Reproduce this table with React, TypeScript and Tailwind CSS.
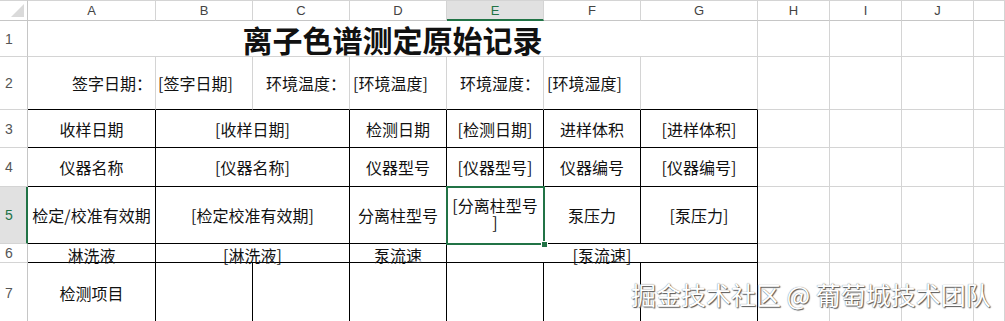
import type { ReactNode } from 'react';

const FONT = '"Noto Sans CJK SC", "Noto Sans", sans-serif';
const LETTERS = ['A', 'B', 'C', 'D', 'E', 'F', 'G', 'H', 'I', 'J', ''];

const spans: Record<number, string> = { 1: '', 2: 'col-span-2', 3: 'col-span-3', 7: 'col-span-7' };

type CellProps = {
  children?: ReactNode;
  span?: number;
  right?: 'k' | 'g';
  bottom?: 'k' | 'g';
  className?: string;
};

function Cell({ children, span = 1, right = 'g', bottom = 'g', className = '' }: CellProps) {
  return (
    <div
      className={`flex items-center overflow-visible whitespace-nowrap border-r border-b text-[16px] leading-none text-[#111] ${
        spans[span]
      } ${right === 'k' ? 'border-r-black' : 'border-r-[#d4d4d4]'} ${
        bottom === 'k' ? 'border-b-black' : 'border-b-[#d4d4d4]'
      } ${className}`}
    >
      {children}
    </div>
  );
}

// black-bordered table cell, centered text
function T({ children, span = 1, className = '' }: { children?: ReactNode; span?: number; className?: string }) {
  return (
    <Cell span={span} right="k" bottom="k" className={`justify-center ${className}`}>
      {children}
    </Cell>
  );
}

function RowHead({ n, active = false }: { n: number; active?: boolean }) {
  return (
    <div
      className={`flex items-center pl-[5px] border-b border-b-[#d4d4d4] text-[14px] leading-none ${
        active
          ? 'bg-[#e1e1e1] text-[#217346] border-r-2 border-r-[#217346]'
          : 'bg-white text-[#555] border-r border-r-[#c6c6c6]'
      }`}
      style={{ fontFamily: '"Liberation Sans", sans-serif' }}
    >
      {n}
    </div>
  );
}

function Blank() {
  return (
    <>
      <Cell />
      <Cell />
      <Cell />
      <Cell />
    </>
  );
}

export default function App() {
  return (
    <div className="relative w-[1005px] h-[321px] overflow-hidden bg-white" style={{ fontFamily: FONT }}>
      <div className="grid grid-cols-[28px_128px_97px_97px_97px_97px_97px_117px_72px_72px_72px_1fr] grid-rows-[21px_36px_53px_38px_39px_57px_19px_60px]">
        {/* column headers */}
        <div className="relative border-t border-t-[#d4d4d4] border-r border-r-[#c6c6c6] border-b border-b-[#c6c6c6] bg-white">
          <svg className="absolute right-[3px] bottom-[3px]" width="13" height="13" viewBox="0 0 13 13">
            <polygon points="13,0 13,13 0,13" fill="#dadada" />
          </svg>
        </div>
        {LETTERS.map((l) => (
          <div
            key={l || 'k'}
            className={`flex items-center justify-center border-t border-t-[#d4d4d4] border-r border-r-[#d4d4d4] text-[13px] leading-none ${
              l === 'E'
                ? 'bg-[#e1e1e1] text-[#217346] border-b-2 border-b-[#217346]'
                : 'bg-white text-[#444] border-b border-b-[#c6c6c6]'
            }`}
            style={{ fontFamily: '"Liberation Sans", sans-serif' }}
          >
            {l}
          </div>
        ))}

        {/* row 1 */}
        <RowHead n={1} />
        <Cell span={7} className="justify-center">
          <span className="text-[30px] font-semibold text-[#111]">离子色谱测定原始记录</span>
        </Cell>
        <Blank />

        {/* row 2 */}
        <RowHead n={2} />
        <Cell bottom="k" className="justify-end pr-[3px]">签字日期：</Cell>
        <Cell bottom="k" className="pl-[2px]">[签字日期]</Cell>
        <Cell bottom="k" className="justify-end pr-[3px]">环境温度：</Cell>
        <Cell bottom="k" className="pl-[3px]">[环境温度]</Cell>
        <Cell bottom="k" className="justify-end pr-[3px]">环境湿度：</Cell>
        <Cell bottom="k" className="pl-[3px]">[环境湿度]</Cell>
        <Cell bottom="k" />
        <Blank />

        {/* row 3 */}
        <RowHead n={3} />
        <T>收样日期</T>
        <T span={2}>[收样日期]</T>
        <T>检测日期</T>
        <T>[检测日期]</T>
        <T>进样体积</T>
        <T>[进样体积]</T>
        <Blank />

        {/* row 4 */}
        <RowHead n={4} />
        <T>仪器名称</T>
        <T span={2}>[仪器名称]</T>
        <T>仪器型号</T>
        <T>[仪器型号]</T>
        <T>仪器编号</T>
        <T>[仪器编号]</T>
        <Blank />

        {/* row 5 */}
        <RowHead n={5} active />
        <T>检定/校准有效期</T>
        <T span={2}>[检定校准有效期]</T>
        <T>分离柱型号</T>
        <T className="relative">
          <div className="flex flex-col items-center gap-[1px] -mt-[3px]">
            <span>[分离柱型号</span>
            <span>]</span>
          </div>
          <div className="absolute -left-px -top-px -right-[2px] -bottom-[2px] z-10 border-2 border-[#217346]">
            <div className="absolute -right-[5px] -bottom-[5px] w-[7px] h-[7px] bg-[#217346] border border-white" />
          </div>
        </T>
        <T>泵压力</T>
        <T>[泵压力]</T>
        <Blank />

        {/* row 6 */}
        <RowHead n={6} />
        <T className="pt-[3px]">淋洗液</T>
        <T span={2} className="pt-[3px]">[淋洗液]</T>
        <T className="pt-[3px]">泵流速</T>
        <T span={3} className="pt-[3px]">[泵流速]</T>
        <Blank />

        {/* row 7 */}
        <RowHead n={7} />
        <T>检测项目</T>
        <T />
        <T />
        <T />
        <T />
        <T />
        <T />
        <Blank />
      </div>

      {/* watermark */}
      <div className="absolute left-[631px] top-[282px] whitespace-nowrap text-[25px] leading-none text-white [text-shadow:1px_1px_1px_#555,0_0_1px_#666]">
        掘金技术社区 @ 葡萄城技术团队
      </div>
    </div>
  );
}
